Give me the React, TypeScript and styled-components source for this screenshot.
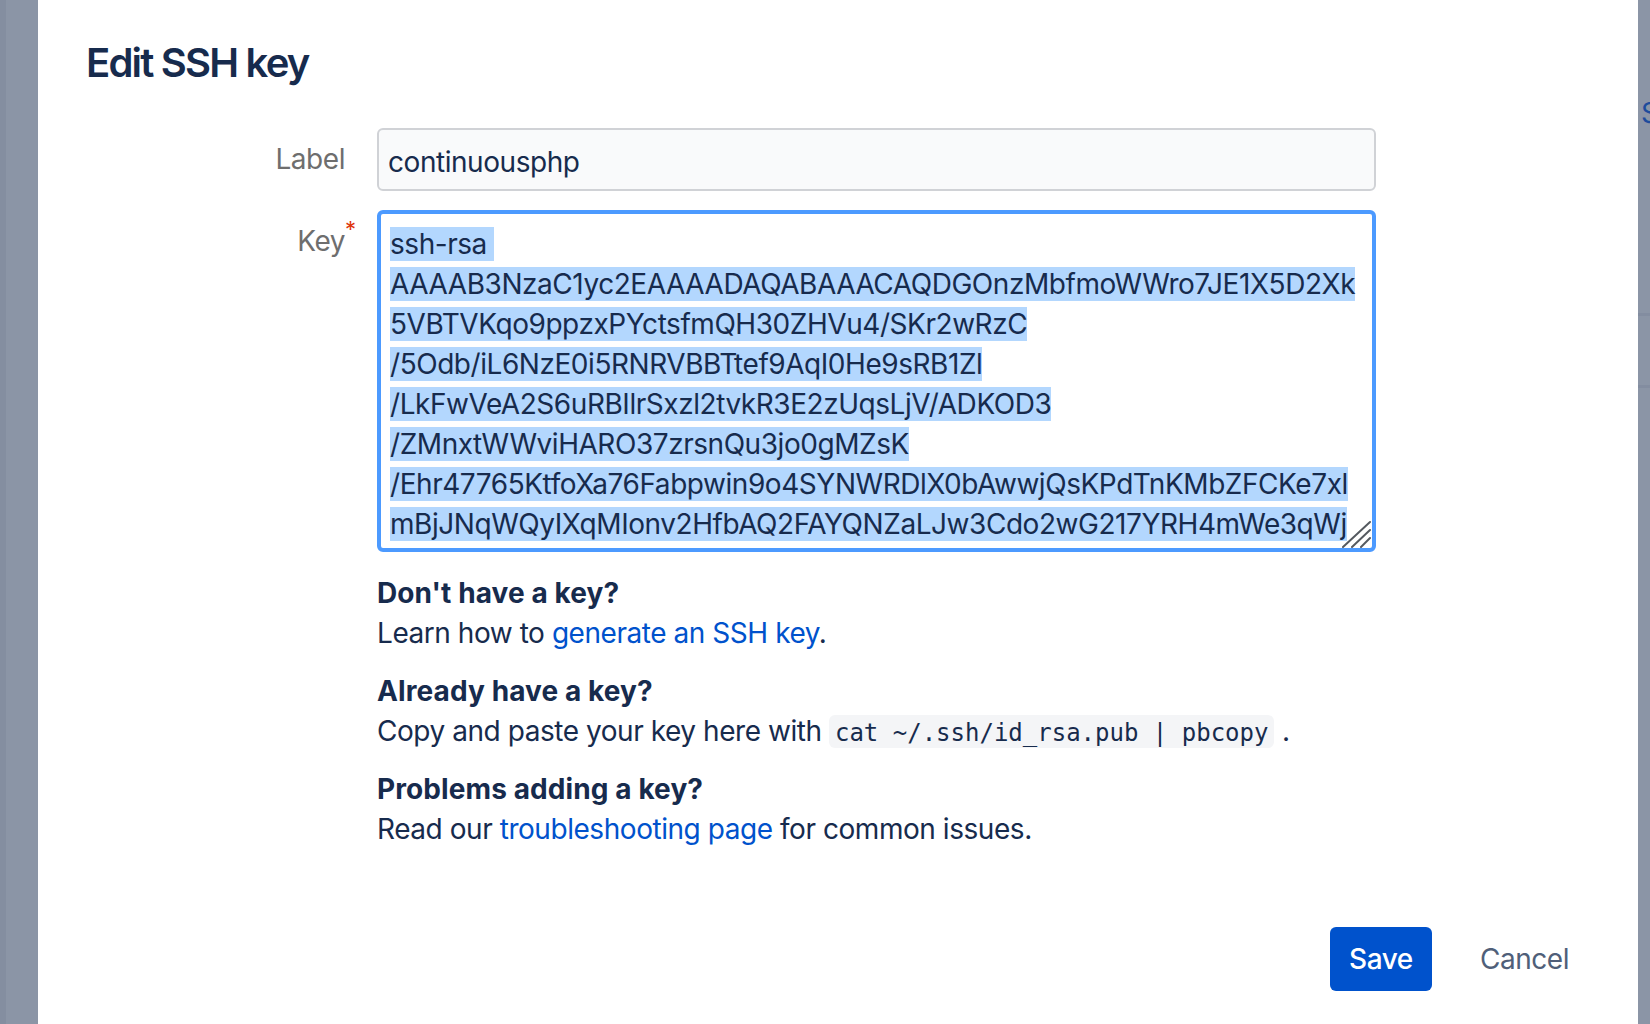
import React from 'react';
import styled, { createGlobalStyle } from 'styled-components';

const GlobalStyle = createGlobalStyle`
  html, body { margin: 0; padding: 0; }
  body {
    background: #8b95a6;
    font-family: Inter, "Noto Sans", sans-serif;
    letter-spacing: -0.45px;
    -webkit-font-smoothing: antialiased;
  }
`;

const Page = styled.div`
  display: flex;
  height: 1024px;
  overflow: hidden;
`;

const LeftGutter = styled.div`
  flex: none;
  width: 32px;
  border-left: 6px solid #848ea0;
  background: #8b95a6;
`;

const RightGutter = styled.div`
  flex: 1;
  display: flex;
  flex-direction: column;
  background: #8b95a6;
  padding-top: 93px;
  overflow: hidden;
`;

const GhostText = styled.div`
  font-size: 28px;
  line-height: 40px;
  color: #1e4c9c;
  padding-left: 3px;
  white-space: nowrap;
`;

const GhostRule = styled.div<{ $gap: number }>`
  height: 3px;
  background: #838da0;
  margin-top: ${(p) => p.$gap}px;
`;

const Modal = styled.section`
  flex: none;
  width: 1600px;
  box-sizing: border-box;
  background: #ffffff;
  padding: 39px 49px 0 48px;
  display: flex;
  flex-direction: column;
`;

const Title = styled.h1`
  margin: 0;
  font-size: 40px;
  line-height: 48px;
  font-weight: 600;
  color: #172b4d;
  letter-spacing: -1.8px;
`;

const Form = styled.div`
  margin-top: 41px;
  display: grid;
  grid-template-columns: 259px 999px;
  column-gap: 32px;
  row-gap: 19px;
`;

const FieldLabel = styled.label`
  text-align: right;
  font-size: 28px;
  line-height: 40px;
  color: #6e6e6e;
  padding-top: 11px;
`;

const LabelText = styled.span`
  position: relative;
`;

const Required = styled.span`
  position: absolute;
  left: 100%;
  top: -15px;
  margin-left: 0;
  font-size: 22px;
  color: #de350b;
`;

const TextInput = styled.input`
  box-sizing: border-box;
  width: 100%;
  height: 63px;
  margin: 0;
  border: 2px solid #d0d2d6;
  border-radius: 6px;
  background: #f9fafb;
  padding: 4px 9px 0;
  font-family: Inter, "Noto Sans", sans-serif;
  font-size: 28px;
  letter-spacing: -0.45px;
  color: #172b4d;
  outline: none;
`;

const KeyBox = styled.div`
  position: relative;
  box-sizing: border-box;
  height: 342px;
  border: 4px solid #4c9aff;
  border-radius: 6px;
  background: #ffffff;
  padding: 10px 9px 4px;
  font-size: 28px;
  line-height: 40px;
  color: #172b4d;
  overflow: hidden;
`;

const KeyLine = styled.div`
  white-space: pre;
`;

const Selected = styled.span`
  background: #b3d7fe;
`;

const ResizeGrip = styled.svg`
  position: absolute;
  right: 0;
  bottom: 0;
  width: 30px;
  height: 30px;
`;

const Help = styled.div`
  grid-column: 2;
  margin-top: 2px;
  display: flex;
  flex-direction: column;
  gap: 18px;
`;

const HelpBlock = styled.div`
  display: flex;
  flex-direction: column;
`;

const HelpTitle = styled.div`
  font-size: 28px;
  line-height: 40px;
  font-weight: 700;
  letter-spacing: 0.1px;
  color: #172b4d;
`;

const HelpText = styled.p`
  margin: 0;
  font-size: 28px;
  line-height: 40px;
  color: #172b4d;
`;

const Link = styled.a`
  color: #0052cc;
  text-decoration: none;
`;

const Code = styled.code`
  font-family: "DejaVu Sans Mono", "Liberation Mono", monospace;
  font-size: 24px;
  letter-spacing: 0;
  line-height: 1;
  background: #f4f5f7;
  border-radius: 6px;
  padding: 4px 6px 1px;
  color: #172b4d;
`;

const Footer = styled.div`
  margin-top: 78px;
  display: flex;
  justify-content: flex-end;
  gap: 28px;
`;

const Button = styled.button<{ $primary?: boolean }>`
  height: 64px;
  padding: 0 ${(p) => (p.$primary ? 19 : 20)}px;
  border: none;
  border-radius: 6px;
  font-family: Inter, "Noto Sans", sans-serif;
  font-size: 28px;
  letter-spacing: -0.45px;
  font-weight: ${(p) => (p.$primary ? 500 : 400)};
  background: ${(p) => (p.$primary ? '#0052cc' : 'transparent')};
  color: ${(p) => (p.$primary ? '#ffffff' : '#505f79')};
  cursor: pointer;
`;

const keyLines = [
  'ssh-rsa ',
  'AAAAB3NzaC1yc2EAAAADAQABAAACAQDGOnzMbfmoWWro7JE1X5D2Xk',
  '5VBTVKqo9ppzxPYctsfmQH30ZHVu4/SKr2wRzC',
  '/5Odb/iL6NzE0i5RNRVBBTtef9AqI0He9sRB1Zl',
  '/LkFwVeA2S6uRBIlrSxzl2tvkR3E2zUqsLjV/ADKOD3',
  '/ZMnxtWWviHARO37zrsnQu3jo0gMZsK',
  '/Ehr47765KtfoXa76Fabpwin9o4SYNWRDlX0bAwwjQsKPdTnKMbZFCKe7xl',
  'mBjJNqWQyIXqMIonv2HfbAQ2FAYQNZaLJw3Cdo2wG217YRH4mWe3qWj',
];

export default function App() {
  return (
    <>
      <GlobalStyle />
      <Page>
        <LeftGutter />
        <Modal>
          <Title>Edit SSH key</Title>
          <Form>
            <FieldLabel htmlFor="label">Label</FieldLabel>
            <TextInput id="label" readOnly defaultValue="continuousphp" />
            <FieldLabel>
              <LabelText>
                Key
                <Required>*</Required>
              </LabelText>
            </FieldLabel>
            <KeyBox role="textbox">
              {keyLines.map((l, i) => (
                <KeyLine key={i}>
                  <Selected>{l}</Selected>
                </KeyLine>
              ))}
              <ResizeGrip viewBox="0 0 30 30">
                <g stroke="#555a60" strokeWidth="2" strokeLinecap="round">
                  <line x1="1" y1="29" x2="28" y2="4" />
                  <line x1="10" y1="29" x2="28" y2="12" />
                  <line x1="19" y1="29" x2="28" y2="20" />
                </g>
              </ResizeGrip>
            </KeyBox>
            <Help>
              <HelpBlock>
                <HelpTitle>Don't have a key?</HelpTitle>
                <HelpText>
                  Learn how to <Link href="#">generate an SSH key</Link>.
                </HelpText>
              </HelpBlock>
              <HelpBlock>
                <HelpTitle>Already have a key?</HelpTitle>
                <HelpText>
                  Copy and paste your key here with <Code>cat ~/.ssh/id_rsa.pub | pbcopy</Code> .
                </HelpText>
              </HelpBlock>
              <HelpBlock>
                <HelpTitle>Problems adding a key?</HelpTitle>
                <HelpText>
                  Read our <Link href="#">troubleshooting page</Link> for common issues.
                </HelpText>
              </HelpBlock>
            </Help>
          </Form>
          <Footer>
            <Button $primary>Save</Button>
            <Button>Cancel</Button>
          </Footer>
        </Modal>
        <RightGutter>
          <GhostText>S</GhostText>
          <GhostRule $gap={180} />
          <GhostRule $gap={69} />
        </RightGutter>
      </Page>
    </>
  );
}
